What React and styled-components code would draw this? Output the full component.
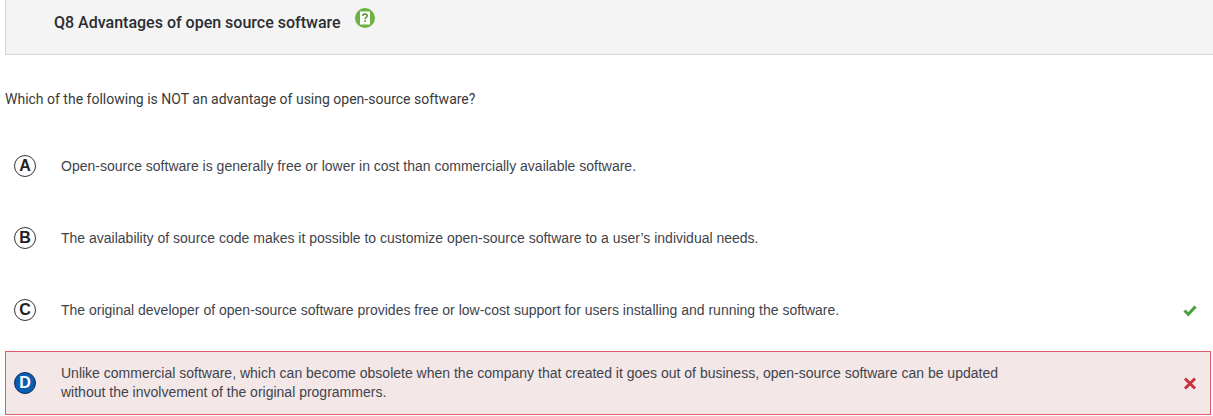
import React from 'react';
import styled, { createGlobalStyle } from 'styled-components';

const GlobalStyle = createGlobalStyle`
  html, body {
    margin: 0;
    padding: 0;
    background: #fff;
    overflow: hidden;
  }
`;

const Page = styled.div`
  width: 1213px;
  height: 416px;
  padding-left: 5px;
  box-sizing: border-box;
  overflow: hidden;
`;

const Header = styled.div`
  display: flex;
  align-items: flex-start;
  height: 55px;
  box-sizing: border-box;
  padding-left: 48px;
  background: #f4f4f4;
  border-left: 1px solid #d6d6d6;
  border-bottom: 1px solid #d6d6d6;
`;

const Title = styled.h2`
  margin: 13px 0 0;
  font: 500 16px/20px Roboto, sans-serif;
  color: #2a2d31;
`;

const HelpBadge = styled.svg`
  width: 20px;
  height: 20px;
  margin: 8px 0 0 14px;
`;

const Question = styled.p`
  margin: 35px 0 0;
  font: 400 14px/18px Roboto, sans-serif;
  color: #3a3a3a;
`;

const OptionList = styled.div`
  display: flex;
  flex-direction: column;
  gap: 8px;
  width: 1206px;
  margin-top: 26px;
`;

const Option = styled.div`
  display: flex;
  align-items: center;
  height: 64px;
  box-sizing: border-box;
  padding: 0 13px 0 8px;
  border: 1px solid ${(p) => (p.$wrong ? '#e25d6c' : 'transparent')};
  background: ${(p) => (p.$wrong ? '#f3e7e8' : 'transparent')};
  margin-top: ${(p) => (p.$wrong ? '1px' : '0')};
`;

const Letter = styled.span`
  flex: none;
  display: flex;
  align-items: center;
  justify-content: center;
  width: 22px;
  height: 22px;
  box-sizing: border-box;
  border-radius: 50%;
  border: ${(p) => (p.$selected ? '1px solid #0c2f5c' : '1.5px solid #333')};
  background: ${(p) => (p.$selected ? '#0a5db0' : '#fff')};
  color: ${(p) => (p.$selected ? '#fff' : '#222')};
  font: 700 16px/1 "Liberation Sans", Arial, sans-serif;
`;

const OptionText = styled.div`
  flex: none;
  width: 950px;
  margin-left: 25px;
  font: 400 14px/${(p) => (p.$wrong ? '19px' : '20px')} "Liberation Sans", Arial, sans-serif;
  color: #3f444c;
`;

const Mark = styled.svg`
  flex: none;
  width: 14px;
  height: 14px;
  margin-left: auto;
  stroke-width: 3;
  fill: none;
`;

const options = [
  { id: 'A', text: 'Open-source software is generally free or lower in cost than commercially available software.' },
  { id: 'B', text: 'The availability of source code makes it possible to customize open-source software to a user\u2019s individual needs.' },
  { id: 'C', text: 'The original developer of open-source software provides free or low-cost support for users installing and running the software.', correct: true },
  { id: 'D', text: 'Unlike commercial software, which can become obsolete when the company that created it goes out of business, open-source software can be updated without the involvement of the original programmers.', wrong: true },
];

const App = () => (
  <Page>
    <GlobalStyle />
    <Header>
      <Title>Q8 Advantages of open source software</Title>
      <HelpBadge viewBox="0 0 20 20">
        <circle cx="10" cy="10" r="10" fill="#6cb33f" />
        <rect x="5" y="3.5" width="10" height="13" fill="#fff" />
        <path d="M7.8 8c0-1.3 1-2 2.2-2s2.2.8 2.2 1.9c0 1.6-2.2 1.6-2.2 3.3" stroke="#4d8a28" strokeWidth="1.4" fill="none" />
        <rect x="9.3" y="12.2" width="1.4" height="1.8" fill="#4d8a28" />
      </HelpBadge>
    </Header>
    <Question>Which of the following is NOT an advantage of using open-source software?</Question>
    <OptionList>
      {options.map((o) => (
        <Option key={o.id} $wrong={o.wrong}>
          <Letter $selected={o.wrong}>{o.id}</Letter>
          <OptionText $wrong={o.wrong}>{o.text}</OptionText>
          {o.correct && (
            <Mark viewBox="0 0 14 14" stroke="#4a9e3f">
              <path d="M1.5 7.5l3.8 3.8L12.5 3.5" />
            </Mark>
          )}
          {o.wrong && (
            <Mark viewBox="0 0 14 14" stroke="#c8323f">
              <path d="M2 2.5l10 10M12 2.5l-10 10" />
            </Mark>
          )}
        </Option>
      ))}
    </OptionList>
  </Page>
);

export default App;
